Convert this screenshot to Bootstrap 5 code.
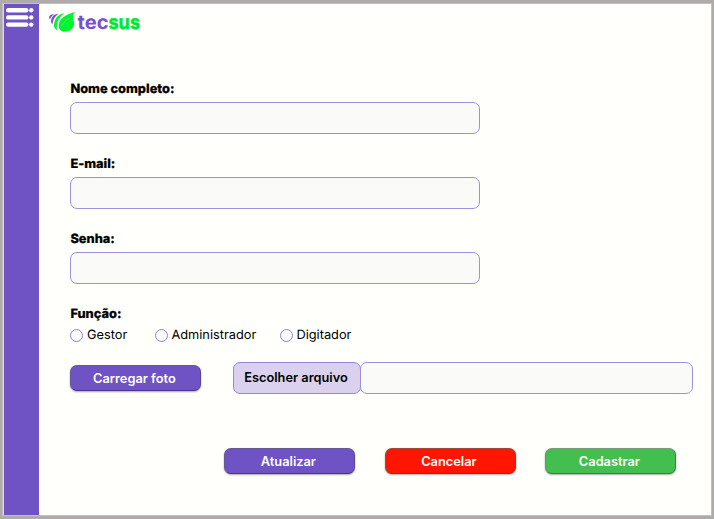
<!DOCTYPE html>
<html lang="pt-BR">
<head>
<meta charset="utf-8">
<meta name="viewport" content="width=device-width, initial-scale=1">
<title>Tecsus - Cadastro</title>
<link href="https://cdn.jsdelivr.net/npm/bootstrap@5.3.0/dist/css/bootstrap.min.css" rel="stylesheet">
<style>
body{font-family:Inter,"Liberation Sans",sans-serif;background:#afabaa;color:#000;height:519px;padding:4px 3px 4px 3px;overflow:hidden;text-rendering:geometricPrecision}
.window{height:511px;background:#fffffc;border-left:1px solid #dcdadd;box-shadow:0 0 0 1px #c2bfbd}
.sidebar{width:35px;background:#6f52c4}
.sidebar .btn{display:block;padding:4px 0 0 2px;line-height:0;border:0}
.sidebar svg{display:block}
.brand{height:36px;padding:7px 0 0 10px}
.form-area{padding:40px 0 0 31.4px}
.field{height:75px}
.form-label{font-size:12.8px;font-weight:800;line-height:18px;height:18px;margin:0 0 4px;padding-top:1px;display:block;-webkit-text-stroke:.2px #000}
.form-control{background:#fafaf8;border:1px solid #a08fdb;border-radius:7px;height:32px;padding:0 8px;font-size:13px}
.field .form-control{width:410px}
.roles{height:18px;font-size:12.8px;line-height:18px;margin-top:-1px}
.roles span{padding-top:2px}
.roles .form-check-input{width:13px;height:13px;margin:0 3.5px 0 0;background-color:#fafaf8;border:1px solid #9381d7}
.role-a{width:84.5px}.role-b{width:125px}
.action{width:131px;height:26px;border:1px solid #65558f;border-radius:7px;font-size:12.8px;font-weight:600;line-height:26px;padding:0 3px 0 0;color:#fffffc;box-shadow:0 1px 2px rgba(0,0,0,.35)}
.action.violet{background:#6f52c4;border-color:#67589a #5646a0 #493590 #67589a}
.action.red{background:#ff1500;border-color:#a4483c #b52b1c #c51a0b #a4483c}
.action.green{background:#43bf4f;border-color:#789b7a #2f8738 #2a8534 #5f9865}
.upload{margin-top:18px}
.upload .choose{width:128px;height:32px;background:#d9d1ee;border:1px solid #9885d8;border-radius:7px;font-size:12.8px;font-weight:600;line-height:30px;padding:0 2px 0 0;color:#000;margin-left:31.6px}
.upload .form-control{width:333px;margin-left:-1px}
.actions{margin:54px 0 0 154px;gap:29.5px}
</style>
</head>
<body>
<div class="window d-flex">
  <nav class="sidebar flex-shrink-0">
    <button class="btn" type="button" aria-label="Menu">
      <svg width="28" height="20" viewBox="0 0 28 20" fill="#fffffc"><rect x="0" y="0" width="22.5" height="4.4" rx="2.2"/><rect x="0" y="7.2" width="22.5" height="4.4" rx="2.2"/><rect x="0" y="14.4" width="22.5" height="4.4" rx="2.2"/><circle cx="25.3" cy="2.2" r="2.2"/><circle cx="25.3" cy="9.4" r="2.2"/><circle cx="25.3" cy="16.6" r="2.2"/></svg>
    </button>
  </nav>
  <main class="flex-grow-1">
    <header class="brand">
      <svg class="d-block" width="94" height="24" viewBox="0 0 94 24" role="img" aria-label="tecsus">
        <g fill="#7650d2"><path d="M0 6.5C.4 4 2.2 3.1 5.4 3.2 3 4.4 1.6 6.1 1 8.5Z"/><path d="M2 11.2C2.1 5.8 4.8 3.1 9.6 2.8 6 5.1 4 8.2 3.4 13.2Z"/></g>
        <g fill="#00f52d"><path d="M5 15.5C4.8 8.2 8.3 3.2 15.2 2.2 9.4 6.8 7.3 11 8 19.2 6.6 18.4 5.6 17.2 5 15.5Z"/><path d="M26 1C18 2.9 10 7.2 9.8 14.5 9.8 18.5 12 20.8 15.8 20.8 21.7 20.8 25.2 16.5 25.1 12.3 25.1 9.5 23.9 8.2 24 5.7 24 4 24.7 2.5 26 1Z"/></g>
        <path d="M12.6 15.2C14.2 11.6 17 9 20.4 7.4" fill="none" stroke="#7dff91" stroke-width=".5"/>
        <g font-family="Inter,sans-serif" font-size="19.5" font-weight="700">
          <text x="28.5" y="18" fill="#7650d2" textLength="31" lengthAdjust="spacingAndGlyphs">tec</text>
          <text x="59.5" y="18" fill="#00e637" stroke="#00e637" stroke-width=".5" textLength="31.5" lengthAdjust="spacingAndGlyphs">sus</text>
        </g>
      </svg>
    </header>
    <form class="form-area">
      <div class="field"><label class="form-label" for="nome">Nome completo:</label><input class="form-control" id="nome" type="text"></div>
      <div class="field"><label class="form-label" for="email">E-mail:</label><input class="form-control" id="email" type="email"></div>
      <div class="field"><label class="form-label" for="senha">Senha:</label><input class="form-control" id="senha" type="password"></div>
      <span class="form-label">Função:</span>
      <div class="roles d-flex">
        <label class="role-a d-flex align-items-center"><input class="form-check-input" type="radio" name="funcao"><span>Gestor</span></label>
        <label class="role-b d-flex align-items-center"><input class="form-check-input" type="radio" name="funcao"><span>Administrador</span></label>
        <label class="d-flex align-items-center"><input class="form-check-input" type="radio" name="funcao"><span>Digitador</span></label>
      </div>
      <div class="upload d-flex align-items-center">
        <button class="btn action violet" type="button">Carregar foto</button>
        <button class="btn choose" type="button">Escolher arquivo</button>
        <input class="form-control" type="text" aria-label="Arquivo">
      </div>
      <div class="actions d-flex">
        <button class="btn action violet" type="button">Atualizar</button>
        <button class="btn action red" type="button">Cancelar</button>
        <button class="btn action green" type="button">Cadastrar</button>
      </div>
    </form>
  </main>
</div>
<script src="https://cdn.jsdelivr.net/npm/bootstrap@5.3.0/dist/js/bootstrap.bundle.min.js"></script>
</body>
</html>
